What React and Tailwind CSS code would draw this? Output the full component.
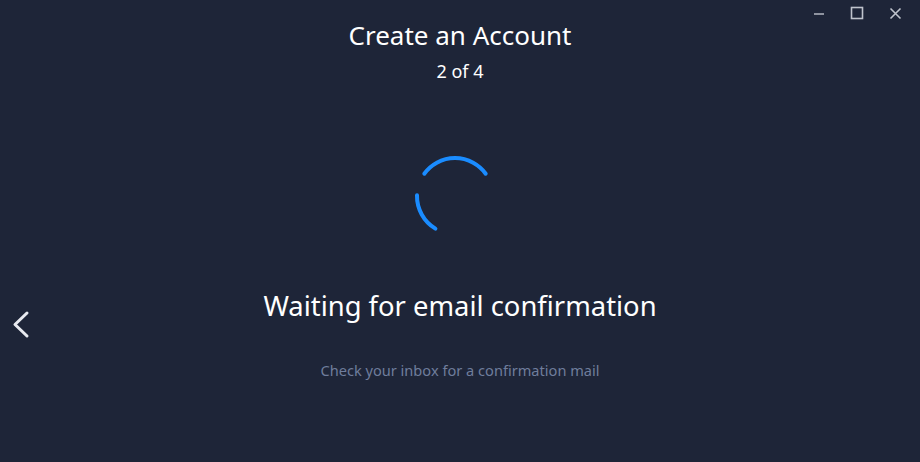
export default function App() {
  return (
    <div
      className="relative w-[920px] h-[462px] bg-[#1e2538] overflow-hidden flex flex-col items-center text-white"
      style={{ fontFamily: '"Noto Sans", "Open Sans", sans-serif' }}
    >
      {/* Window controls */}
      <div className="absolute top-0 right-0 flex items-center text-[#bfc3cc]">
        <button className="w-[38px] h-[26px] flex items-center justify-center" aria-label="Minimize">
          <svg width="12" height="12" viewBox="0 0 12 12">
            <path d="M1 7h10" stroke="currentColor" strokeWidth="1.4" />
          </svg>
        </button>
        <button className="w-[38px] h-[26px] flex items-center justify-center" aria-label="Maximize">
          <svg width="14" height="14" viewBox="0 0 14 14">
            <rect x="1.5" y="1.5" width="11" height="11" fill="none" stroke="currentColor" strokeWidth="1.6" />
          </svg>
        </button>
        <button className="w-[38px] h-[26px] mr-[6px] flex items-center justify-center" aria-label="Close">
          <svg width="13" height="13" viewBox="0 0 13 13">
            <path d="M1.5 1.5l10 10M11.5 1.5l-10 10" stroke="currentColor" strokeWidth="1.6" />
          </svg>
        </button>
      </div>

      {/* Back */}
      <button className="absolute left-[7px] top-[305px] p-1 text-[#e8eaf0]" aria-label="Back">
        <svg width="20" height="30" viewBox="0 0 20 30">
          <path d="M16 4L4 15.5L16 27" fill="none" stroke="currentColor" strokeWidth="3" strokeLinecap="round" strokeLinejoin="round" />
        </svg>
      </button>

      <h1 className="mt-[19px] text-[26px] leading-[32px] font-normal text-white">Create an Account</h1>
      <p className="mt-[8px] text-[18px] leading-[24px] text-white">2 of 4</p>

      {/* Spinner */}
      <svg className="mt-[63px]" width="100" height="100" viewBox="0 0 100 100">
        <g fill="none" stroke="#1a8cff" strokeWidth="4" strokeLinecap="round">
          <path d="M14.3 27.7A38 38 0 0 1 75.7 27.7" />
          <path d="M25.4 82.6A38 38 0 0 1 7 49.3" />
        </g>
      </svg>

      <h2 className="mt-[41px] text-[27.4px] leading-[38px] font-normal text-white">Waiting for email confirmation</h2>
      <p className="mt-[35px] text-[14.6px] leading-[20px] text-[#6f7d9c]">Check your inbox for a confirmation mail</p>
    </div>
  )
}
